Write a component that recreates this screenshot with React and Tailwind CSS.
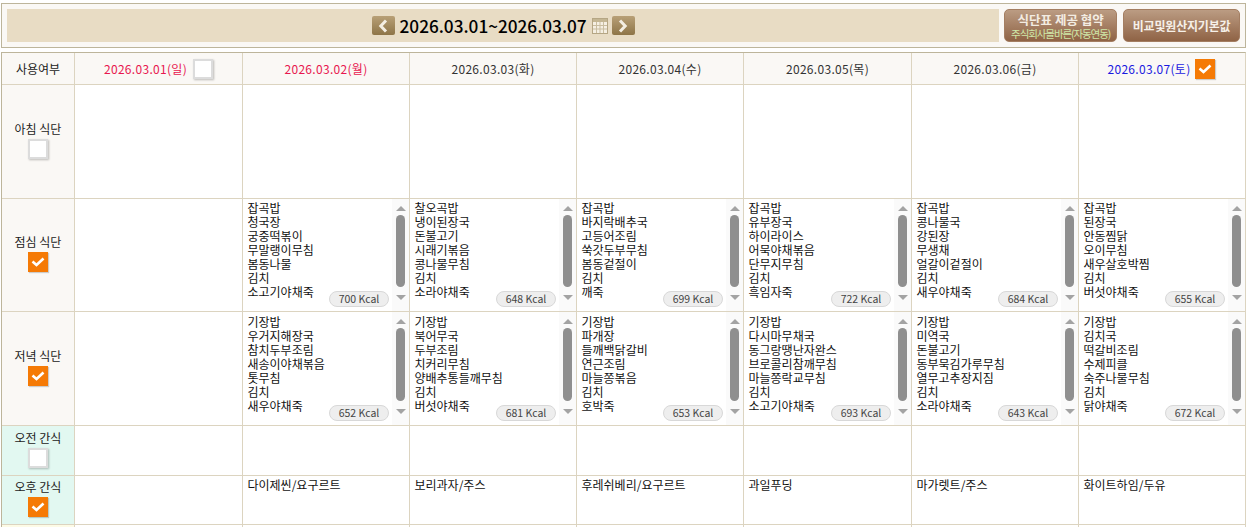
import React from "react";

const days = [
  { d: "2026.03.01(일)", c: "text-[#e8174f] gap-[6px]", box: false },
  { d: "2026.03.02(월)", c: "text-[#e8174f]" },
  { d: "2026.03.03(화)", c: "text-[#333333]" },
  { d: "2026.03.04(수)", c: "text-[#333333]" },
  { d: "2026.03.05(목)", c: "text-[#333333]" },
  { d: "2026.03.06(금)", c: "text-[#333333]" },
  { d: "2026.03.07(토)", c: "text-[#1a1ae0] gap-[4px] pr-[2px]", box: true },
];

const lunch = [
  { m: ["잡곡밥", "청국장", "궁중떡볶이", "무말랭이무침", "봄동나물", "김치", "소고기야채죽"], k: 700 },
  { m: ["찰오곡밥", "냉이된장국", "돈불고기", "시래기볶음", "콩나물무침", "김치", "소라야채죽"], k: 648 },
  { m: ["잡곡밥", "바지락배추국", "고등어조림", "쑥갓두부무침", "봄동겉절이", "김치", "깨죽"], k: 699 },
  { m: ["잡곡밥", "유부장국", "하이라이스", "어묵야채볶음", "단무지무침", "김치", "흑임자죽"], k: 722 },
  { m: ["잡곡밥", "콩나물국", "강된장", "무생채", "얼갈이겉절이", "김치", "새우야채죽"], k: 684 },
  { m: ["잡곡밥", "된장국", "안동찜닭", "오이무침", "새우살호박찜", "김치", "버섯야채죽"], k: 655 },
];

const dinner = [
  { m: ["기장밥", "우거지해장국", "참치두부조림", "새송이야채볶음", "톳무침", "김치", "새우야채죽"], k: 652 },
  { m: ["기장밥", "북어무국", "두부조림", "치커리무침", "양배추통들깨무침", "김치", "버섯야채죽"], k: 681 },
  { m: ["기장밥", "파개장", "들깨백닭갈비", "연근조림", "마늘쫑볶음", "김치", "호박죽"], k: 653 },
  { m: ["기장밥", "다시마무채국", "동그랑땡난자완스", "브로콜리참깨무침", "마늘쫑락교무침", "김치", "소고기야채죽"], k: 693 },
  { m: ["기장밥", "미역국", "돈불고기", "동부묵김가루무침", "열무고추장지짐", "김치", "소라야채죽"], k: 643 },
  { m: ["기장밥", "김치국", "떡갈비조림", "수제피클", "숙주나물무침", "김치", "닭야채죽"], k: 672 },
];

const snacks = ["다이제씬/요구르트", "보리과자/주스", "후레쉬베리/요구르트", "과일푸딩", "마가렛트/주스", "화이트하임/두유"];

function Check({ on }) {
  return on ? (
    <span className="flex h-[20px] w-[20px] items-center justify-center bg-[#f57a05] shadow-[1px_1px_1px_rgba(0,0,0,0.18)]">
      <svg width="14" height="12" viewBox="0 0 14 12" fill="none">
        <path d="M1.5 5.5 L5.5 9 L12.5 2.5" stroke="#fff" strokeWidth="2.6" />
      </svg>
    </span>
  ) : (
    <span className="block h-[20px] w-[20px] border-2 border-[#dcdcdc] bg-white shadow-[1px_1px_2px_rgba(0,0,0,0.25)]" />
  );
}

function Side({ label, on, bg = "bg-[#faf8f5]" }) {
  return (
    <div className={`flex flex-col items-center justify-center gap-[2px] pb-[4px] text-[12px] leading-[16px] text-[#222] ${bg}`}>
      <span>{label}</span>
      <Check on={on} />
    </div>
  );
}

function Menu({ m, k, top, thumb }) {
  return (
    <div className={`relative flex bg-white ${top}`}>
      <div className="flex-1 pl-[4.5px] text-[12px] leading-[14px] text-[#111]">
        {m.map((x, i) => (
          <div key={i}>{x}</div>
        ))}
      </div>
      <span className="absolute bottom-[4px] right-[20px] flex h-[16px] w-[60px] items-center justify-center rounded-full border border-[#d8d8d8] bg-[#eeeeee] text-[10.5px] text-[#444]">
        {k} Kcal
      </span>
      <div className="absolute inset-y-0 right-0 flex w-[17px] flex-col items-center bg-[#fafafa]">
        <span className="mt-[7px] h-0 w-0 border-x-[5px] border-b-[5px] border-x-transparent border-b-[#a3a3a3]" />
        <span className={`mt-[4px] w-[9px] rounded-full bg-[#8f8f8f] ${thumb}`} />
        <span className="mt-[8px] h-0 w-0 border-x-[5px] border-t-[5px] border-x-transparent border-t-[#a3a3a3]" />
      </div>
    </div>
  );
}

function Arrow({ dir }) {
  return (
    <span className="flex h-[19px] w-[23px] items-center justify-center rounded-[2px] bg-gradient-to-b from-[#b8a077] to-[#8e7547]">
      <svg width="10" height="14" viewBox="0 0 10 14" fill="none">
        <path d={dir === "l" ? "M8 1.5 L2.8 7 L8 12.5" : "M2 1.5 L7.2 7 L2 12.5"} stroke="#f4eee2" strokeWidth="3" />
      </svg>
    </span>
  );
}

function Cal() {
  return (
    <svg width="16" height="16" viewBox="0 0 16 16" className="block">
      <rect x="0.5" y="0.5" width="15" height="15" fill="#f5efe2" stroke="#b5a684" />
      <rect x="1" y="1" width="14" height="3" fill="#c4b693" />
      <path d="M4.5 4V15M8 4V15M11.5 4V15M1 7.5H15M1 11H15" stroke="#c9bda0" strokeWidth="1" />
    </svg>
  );
}

export default function App() {
  const empty = Array.from({ length: 7 });
  return (
    <div
      className="h-[527px] w-[1249px] overflow-hidden bg-white pl-px pt-[3px]"
      style={{ fontFamily: '"Noto Sans CJK KR", "Noto Sans", sans-serif' }}
    >
      <div className="flex h-[45px] w-[1245px] border border-[#bdb59b] bg-[#faf8f5] px-[5px] pt-[5px]">
        <div className="flex h-[33px] w-[993px] items-center justify-center bg-[#e8dcc4]">
          <Arrow dir="l" />
          <span className="mx-[5px] text-[17.2px] font-medium leading-none text-black">2026.03.01~2026.03.07</span>
          <Cal />
          <span className="ml-[4px]">
            <Arrow dir="r" />
          </span>
        </div>
        <div className="ml-[5px] flex h-[33px] w-[113px] flex-col items-center justify-center rounded-[5px] border border-[#a47e62] bg-gradient-to-b from-[#bb9c83] to-[#8f6345] text-center">
          <span className="text-[12.5px] font-bold leading-[15px] text-[#f3ece2]">식단표 제공 협약</span>
          <span className="whitespace-nowrap text-[10.5px] leading-[13px] tracking-[-1.1px] text-[#cfe8a8]">주식회사몰바른(자동연동)</span>
        </div>
        <div className="ml-[6px] flex h-[33px] w-[117px] items-center justify-center rounded-[5px] border border-[#a47e62] bg-gradient-to-b from-[#bb9c83] to-[#8f6345] text-[12px] font-bold tracking-[-0.2px] text-[#f6f0e8]">
          비교및원산지기본값
        </div>
      </div>

      <div className="mt-[4px] grid w-[1245px] grid-cols-[72px_167px_166px_166px_166px_167px_166px_166px] grid-rows-[31px_113px_112px_113px_49px_48px_40px] gap-px border border-[#bdb59b] border-r-[#dcd4c0] bg-[#dcd4c0]">
        <div className="flex items-center justify-center bg-[#faf8f5] text-[12px] text-[#222]">사용여부</div>
        {days.map((x) => (
          <div key={x.d} className={`flex items-center justify-center bg-[#faf8f5] text-[12px] tracking-[0.3px] ${x.c}`}>
            <span>{x.d}</span>
            {x.box !== undefined && <Check on={x.box} />}
          </div>
        ))}

        <Side label="아침 식단" on={false} />
        {empty.map((_, i) => (
          <div key={i} className="bg-white" />
        ))}

        <Side label="점심 식단" on />
        <div className="bg-white" />
        {lunch.map((x, i) => (
          <Menu key={i} {...x} top="pt-[2px]" thumb="h-[72px]" />
        ))}

        <Side label="저녁 식단" on />
        <div className="bg-white" />
        {dinner.map((x, i) => (
          <Menu key={i} {...x} top="pt-[3px]" thumb="h-[73px]" />
        ))}

        <Side label="오전 간식" on={false} bg="bg-[#e2f8f1]" />
        {empty.map((_, i) => (
          <div key={i} className="bg-white" />
        ))}

        <Side label="오후 간식" on bg="bg-[#e2f8f1]" />
        <div className="bg-white" />
        {snacks.map((s) => (
          <div key={s} className="bg-white pl-[4.5px] pt-[2px] text-[12px] leading-[14px] text-[#111]">
            {s}
          </div>
        ))}

        <div className="bg-[#fdfbe6]" />
        {empty.map((_, i) => (
          <div key={i} className="bg-white" />
        ))}
      </div>
    </div>
  );
}
